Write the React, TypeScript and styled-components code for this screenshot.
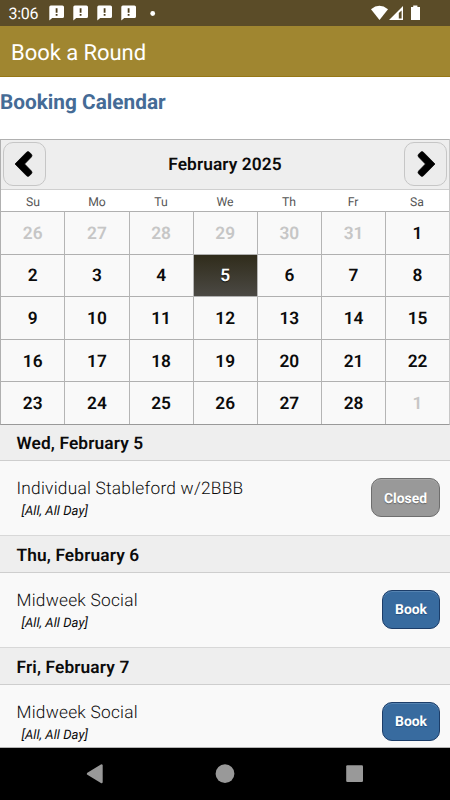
import React from 'react';
import styled, { createGlobalStyle } from 'styled-components';

const GlobalStyle = createGlobalStyle`
  *, *::before, *::after { box-sizing: border-box; }
  html, body { margin: 0; padding: 0; background: #fff; }
  body {
    font-family: Roboto, "Liberation Sans", sans-serif;
    color: #0b0b0b;
    text-rendering: geometricPrecision;
  }
  button { font-family: inherit; text-rendering: inherit; }
`;

const Screen = styled.div`
  width: 450px;
  height: 800px;
  display: flex;
  flex-direction: column;
  overflow: hidden;
  background: #fff;
`;

const StatusBar = styled.div`
  flex: none;
  height: 26px;
  display: flex;
  justify-content: space-between;
  background: #5b4c28;
  color: #fff;
`;

const Clock = styled.span`
  width: 40px;
  padding-left: 8.5px;
  font-size: 16px;
  line-height: 28px;
  letter-spacing: -0.3px;
`;

const StatusGroup = styled.div`
  display: flex;
`;

const StatusIcons = styled.svg`
  display: block;
  height: 26px;
`;

const AppBar = styled.header`
  flex: none;
  height: 51px;
  padding-left: 11px;
  background: #a08630;
  border-bottom: 1px solid #967716;
  color: #fff;
  font-size: 22px;
  line-height: 56px;
  letter-spacing: -0.05px;
`;

const Content = styled.main`
  flex: none;
  height: 671px;
  overflow: hidden;
  display: flex;
  flex-direction: column;
  border-bottom: 1px solid #b4b4b4;
`;

const PageTitle = styled.h1`
  flex: none;
  height: 62px;
  margin: 0;
  padding-top: 10px;
  color: #456b96;
  font-size: 20.8px;
  font-weight: 700;
  line-height: 33px;
`;

const Calendar = styled.section`
  flex: none;
  height: 286px;
  border: 1px solid #b0b0b0;
  border-right-color: #c8c8c8;
  border-bottom-color: #999;
  background: #f9f9f9;
`;

const MonthBar = styled.div`
  height: 50px;
  display: flex;
  align-items: flex-start;
  justify-content: space-between;
  padding: 2px 2px 0;
  background: #eee;
  border-bottom: 1px solid #cfcfcf;
`;

const MonthName = styled.span`
  font-size: 17.3px;
  font-weight: 600;
  letter-spacing: 0.1px;
  line-height: 46px;
`;

const ArrowButton = styled.button`
  width: 43px;
  height: 44px;
  padding: 0;
  border: 1px solid #c6c6c6;
  border-radius: 10px;
  background: #ececec;
`;

const ArrowIcon = styled.svg<{ $flip?: boolean }>`
  display: block;
  transform: ${(p) => (p.$flip ? 'scaleX(-1)' : 'none')};
`;

const Weekdays = styled.div`
  display: grid;
  grid-template-columns: repeat(7, 1fr);
  height: 21px;
  background: #fff;
  color: #555;
  font-size: 12.2px;
  font-weight: 400;
  line-height: 24px;
  text-align: center;
`;

const Days = styled.div`
  display: grid;
  grid-template-columns: 63.4px repeat(5, 64.15px) 1fr;
  grid-template-rows: repeat(5, 1fr);
  height: 213px;
`;

const Day = styled.div<{ $muted: boolean; $selected: boolean; $first: boolean }>`
  display: flex;
  align-items: center;
  justify-content: center;
  padding-top: 2px;
  border-top: 1px solid #b0b0b0;
  border-left: ${(p) => (p.$first ? 'none' : '1px solid #b5b5b5')};
  font-size: 17.3px;
  font-weight: 600;
  color: ${(p) => (p.$selected ? '#fff' : p.$muted ? '#c6c6c6' : '#0b0b0b')};
  background: ${(p) => (p.$selected ? 'linear-gradient(#302c1b, #4b4944)' : 'transparent')};
  text-shadow: ${(p) => (p.$selected ? '0 1px 1px #111' : 'none')};
`;

const DateHeader = styled.h2<{ $height: number }>`
  flex: none;
  height: ${(p) => p.$height}px;
  margin: 0;
  padding-left: 16.5px;
  background: #eee;
  border-bottom: 1px solid #cecece;
  font-size: 17.3px;
  font-weight: 600;
  line-height: ${(p) => p.$height + 3}px;
  letter-spacing: 0.13px;
`;

const Event = styled.div`
  flex: none;
  height: 75px;
  display: flex;
  justify-content: space-between;
  padding: 16px 10px 0 16.5px;
  background: #f9f9f9;
  border-bottom: 1px solid #d8d8d8;
`;

const EventName = styled.div`
  height: 23px;
  font-size: 17.3px;
  font-weight: 300;
  line-height: 25px;
  letter-spacing: 0.25px;
`;

const EventDetail = styled.div`
  padding-left: 5px;
  font-size: 13.1px;
  font-style: italic;
  font-weight: 400;
  line-height: 23px;
  letter-spacing: 0.05px;
`;

const ActionButton = styled.button<{ $closed: boolean }>`
  width: ${(p) => (p.$closed ? 69 : 58)}px;
  height: 39px;
  margin-top: 1px;
  padding: ${(p) => (p.$closed ? 2 : 0)}px 0 0;
  border: 1px solid ${(p) => (p.$closed ? '#6e6e6e' : '#1c3d69')};
  border-radius: 10px;
  background: ${(p) => (p.$closed ? '#999' : '#386b9f')};
  box-shadow: inset 0 1px 0 ${(p) => (p.$closed ? '#a6a6a6' : '#5583b1')};
  color: #fff;
  font-size: 13.9px;
  font-weight: 700;
  text-shadow: 0 1px 1px ${(p) => (p.$closed ? '#666' : '#254e7c')};
`;

const NavBar = styled.nav`
  flex: none;
  height: 52px;
  background: #000;
`;

const NavIcons = styled.svg`
  display: block;
`;

const weekdays = ['Su', 'Mo', 'Tu', 'We', 'Th', 'Fr', 'Sa'];
const days = [26, 27, 28, 29, 30, 31, ...Array.from({ length: 28 }, (_, i) => i + 1), 1];
const agenda = [
  { date: 'Wed, February 5', height: 36, name: 'Individual Stableford w/2BBB', closed: true },
  { date: 'Thu, February 6', height: 37, name: 'Midweek Social', closed: false },
  { date: 'Fri, February 7', height: 37, name: 'Midweek Social', closed: false },
];

const Arrow = ({ flip }: { flip?: boolean }) => (
  <ArrowIcon $flip={flip} width="41" height="42" viewBox="0 0 41 42">
    <path d="M11 21 L22.6 9.2 Q24 8 25.4 9.2 L27.4 11.2 Q28.6 12.6 27.4 14 L20.6 21 L27.4 28 Q28.6 29.4 27.4 30.8 L25.4 32.8 Q24 34 22.6 32.8 Z" fill="#000" stroke="#000" strokeWidth="0.7" strokeLinejoin="round" />
  </ArrowIcon>
);

export default function App() {
  return (
    <>
      <GlobalStyle />
      <Screen>
        <StatusBar>
          <StatusGroup>
            <Clock>3:06</Clock>
            <StatusIcons width="120" viewBox="40 0 120 26">
              {[49, 73, 97, 121].map((x) => (
                <g key={x} transform={`translate(${x} 5.5)`}>
                  <path d="M1.8 0H13.4Q15 0 15 1.6V11Q15 12.6 13.4 12.6H3.2L0.3 15V1.6Q.3 0 1.8 0Z" fill="#fff" />
                  <path d="M6.7 2.7H8.5V7.2H6.7ZM6.7 8.5H8.5V10.2H6.7Z" fill="#493a18" />
                </g>
              ))}
              <circle cx="152.7" cy="13.5" r="2.4" fill="#fff" />
            </StatusIcons>
          </StatusGroup>
          <StatusIcons width="85" viewBox="365 0 85 26">
            <path d="M371 9.2Q379.3 2.5 388 9.2L379.5 20Z" fill="#fff" />
            <path fillRule="evenodd" d="M403 6V20H389ZM401.6 10.5L398.8 13V18.6H401.6Z" fill="#fff" />
            <path d="M413.2 5.5H417.4V7H420V20H411V7H413.2Z" fill="#fff" />
          </StatusIcons>
        </StatusBar>
        <AppBar>Book a Round</AppBar>
        <Content>
          <PageTitle>Booking Calendar</PageTitle>
          <Calendar>
            <MonthBar>
              <ArrowButton aria-label="Previous month"><Arrow /></ArrowButton>
              <MonthName>February 2025</MonthName>
              <ArrowButton aria-label="Next month"><Arrow flip /></ArrowButton>
            </MonthBar>
            <Weekdays>
              {weekdays.map((w) => <span key={w}>{w}</span>)}
            </Weekdays>
            <Days>
              {days.map((d, i) => (
                <Day key={i} $first={i % 7 === 0} $muted={i < 6 || i === 34} $selected={i === 10}>{d}</Day>
              ))}
            </Days>
          </Calendar>
          {agenda.map((a) => (
            <React.Fragment key={a.date}>
              <DateHeader $height={a.height}>{a.date}</DateHeader>
              <Event>
                <div>
                  <EventName>{a.name}</EventName>
                  <EventDetail>[All, All Day]</EventDetail>
                </div>
                <ActionButton $closed={a.closed}>{a.closed ? 'Closed' : 'Book'}</ActionButton>
              </Event>
            </React.Fragment>
          ))}
        </Content>
        <NavBar>
          <NavIcons width="450" height="52" viewBox="0 748 450 52">
            <path d="M101.5 765.5V782L88 773.8Z" fill="#999" stroke="#999" strokeWidth="2.4" strokeLinejoin="round" />
            <circle cx="225" cy="773.7" r="9.4" fill="#999" />
            <rect x="346.2" y="765.2" width="16.8" height="16.8" rx="1.2" fill="#999" />
          </NavIcons>
        </NavBar>
      </Screen>
    </>
  );
}
